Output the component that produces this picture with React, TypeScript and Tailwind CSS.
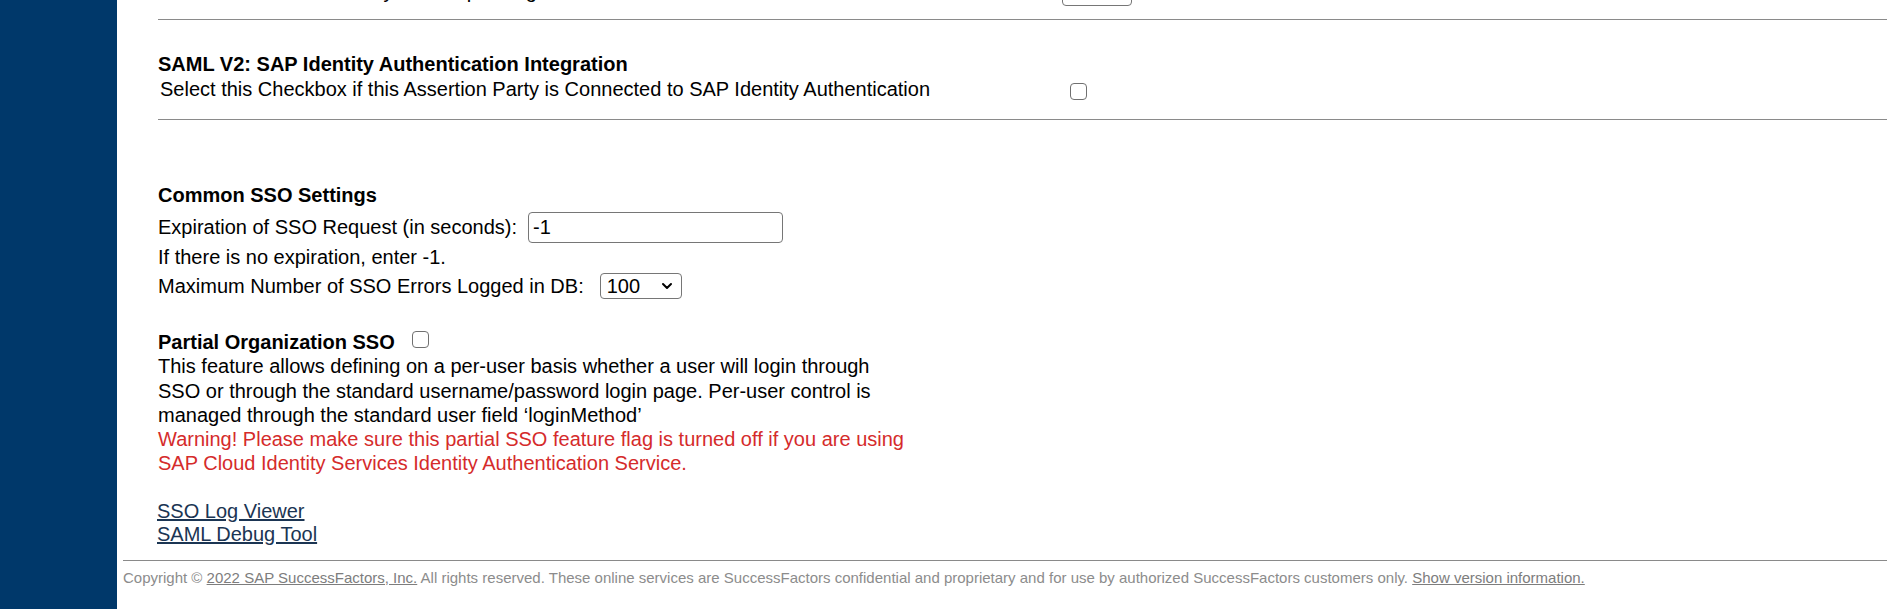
import { ChevronDown } from "lucide-react";

export default function App() {
  return (
    <div className="flex h-[609px] overflow-hidden bg-white text-black font-['Liberation_Sans',Arial,sans-serif]">
      <aside className="w-[117px] shrink-0 bg-[#00386a]" />

      <main className="flex-1 pl-[6px] pr-[4px]">
        <div className="pl-[35px]">
          {/* previous setting row, scrolled mostly out of view */}
          <div className="-mt-[24px] grid grid-cols-[904px_auto] items-center h-[30px] text-[20px] leading-[23px]">
            <span className="pl-[2px]">Number of Assertion Party Entries per Page</span>
            <SelectBox value="100" width="w-[70px]" height="h-[30px]" />
          </div>
          <div className="mt-[13px] border-t border-[#8a8a8a]" />

          {/* SAML V2 */}
          <section className="pt-[33px] pb-[18px] text-[20px] leading-[23px]">
            <h2 className="font-bold">SAML V2: SAP Identity Authentication Integration</h2>
            <div className="mt-[2px] grid grid-cols-[904px_auto] items-center">
              <span className="pl-[2px]">
                Select this Checkbox if this Assertion Party is Connected to SAP Identity Authentication
              </span>
              <Checkbox className="ml-[8px] mt-[4px]" />
            </div>
          </section>
          <div className="border-t border-[#8a8a8a]" />

          {/* Common SSO */}
          <section className="pt-[64px] text-[20px] leading-[23px]">
            <h2 className="font-bold">Common SSO Settings</h2>
            <div className="mt-[5px] flex items-center gap-[11px]">
              <span>Expiration of SSO Request (in seconds):</span>
              <input
                defaultValue="-1"
                className="w-[255px] h-[31px] rounded-[4px] border border-[#767676] px-[4px] text-[20px] outline-none"
              />
            </div>
            <p className="mt-[3px]">If there is no expiration, enter -1.</p>
            <div className="mt-[4px] flex items-center gap-[16px]">
              <span>Maximum Number of SSO Errors Logged in DB:</span>
              <SelectBox value="100" width="w-[82px]" height="h-[26px]" />
            </div>
          </section>

          {/* Partial org SSO */}
          <section className="pt-[31px] text-[20px] leading-[24.3px]">
            <div className="flex items-center gap-[17px]">
              <h2 className="font-bold">Partial Organization SSO</h2>
              <Checkbox className="-mt-[6px]" />
            </div>
            <p className="w-[755px]">
              This feature allows defining on a per-user basis whether a user will login through SSO or through the
              standard username/password login page. Per-user control is managed through the standard user field
              ‘loginMethod’
            </p>
            <p className="w-[755px] text-[#d52b2b]">
              Warning! Please make sure this partial SSO feature flag is turned off if you are using SAP Cloud Identity
              Services Identity Authentication Service.
            </p>
          </section>

          <div className="pt-[24px] pb-[14px] flex flex-col text-[20px] leading-[23px] text-[#1b3553]">
            <a href="#" className="underline self-start -ml-[1px]">SSO Log Viewer</a>
            <a href="#" className="underline self-start -ml-[1px]">SAML Debug Tool</a>
          </div>
        </div>

        <footer className="border-t border-[#8a8a8a] pt-[8px] text-[15px] leading-[18px] text-[#8c8c8c]">
          Copyright ©{" "}
          <a href="#" className="underline text-[#7d7d7d]">2022 SAP SuccessFactors, Inc.</a> All rights reserved.
          These online services are SuccessFactors confidential and proprietary and for use by authorized
          SuccessFactors customers only.{" "}
          <a href="#" className="underline text-[#7d7d7d]">Show version information.</a>
        </footer>
      </main>
    </div>
  );
}

function Checkbox({ className = "" }: { className?: string }) {
  return (
    <span
      className={`inline-block w-[17px] h-[17px] rounded-[4px] border-[1.5px] border-[#707070] bg-white ${className}`}
    />
  );
}

function SelectBox({ value, width, height }: { value: string; width: string; height: string }) {
  return (
    <div
      className={`${width} ${height} flex items-center justify-between rounded-[4px] border border-[#767676] bg-white pl-[6px] pr-[6px] text-[20px]`}
    >
      <span>{value}</span>
      <ChevronDown size={16} strokeWidth={3} />
    </div>
  );
}
